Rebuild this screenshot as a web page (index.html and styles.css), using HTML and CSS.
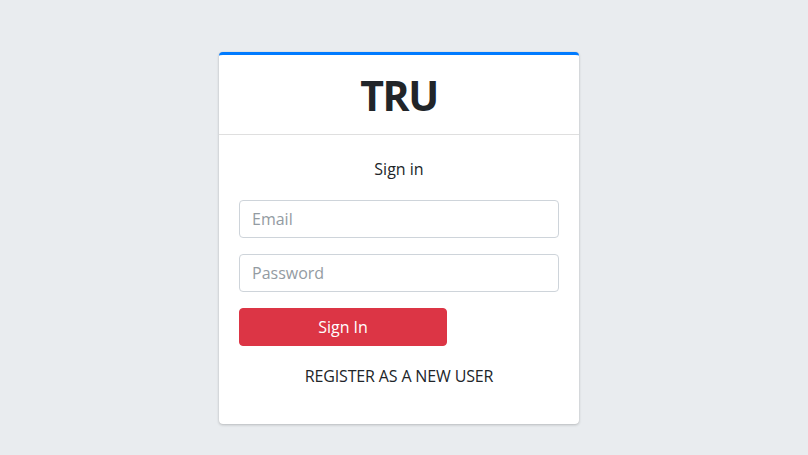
FILE: index.html
```html
<!DOCTYPE html>
<html>
<head>
<meta charset="utf-8">
<link rel="stylesheet" href="styles.css">
</head>
<body>
<div class="login-box">
  <div class="card">
    <div class="card-header">
      <span class="logo">TRU</span>
    </div>
    <div class="card-body">
      <p class="msg">Sign in</p>
      <form class="form">
        <input class="input" type="email" placeholder="Email">
        <input class="input" type="password" placeholder="Password">
        <div class="row">
          <button class="btn" type="button">Sign In</button>
        </div>
      </form>
      <p class="register">REGISTER AS A NEW USER</p>
    </div>
  </div>
</div>
</body>
</html>
```
FILE: styles.css
```css
html, body {
  margin: 0;
  padding: 0;
}
body {
  background: #e9ecef;
  font-family: "Open Sans", "Noto Sans", sans-serif;
  color: #212529;
  font-size: 16px;
  line-height: 24px;
  height: 455px;
  display: flex;
  justify-content: center;
  align-items: flex-start;
  padding: 52px 10px 0 0;
  box-sizing: border-box;
}
.login-box {
  width: 360px;
}
.card {
  background: #fff;
  border-top: 3px solid #007bff;
  border-radius: 4px;
  box-shadow: 0 0 1px rgba(0,0,0,.125), 0 1px 3px rgba(0,0,0,.2);
}
.card-header {
  height: 79px;
  border-bottom: 1px solid rgba(0,0,0,.125);
  display: flex;
  align-items: center;
  justify-content: center;
}
.logo {
  font-weight: 700;
  font-size: 41px;
  line-height: 50px;
  letter-spacing: -1.5px;
}
.card-body {
  padding: 22px 20px 36px;
}
.msg {
  margin: 0;
  padding: 0 20px 19px;
  text-align: center;
}
.form {
  display: flex;
  flex-direction: column;
  gap: 16px;
}
.input {
  height: 38px;
  box-sizing: border-box;
  border: 1px solid #ced4da;
  border-radius: 4px;
  padding: 6px 12px;
  font-family: inherit;
  font-size: 16px;
  color: #495057;
  outline: none;
}
.input::placeholder {
  color: #939ba2;
}
.row {
  display: flex;
}
.btn {
  width: 208px;
  height: 38px;
  background: #dc3545;
  border: 1px solid #dc3545;
  border-radius: 4px;
  color: #fff;
  font-family: inherit;
  font-size: 16px;
  padding: 0;
}
.register {
  margin: 18px 0 0;
  text-align: center;
  color: #212529;
  letter-spacing: -0.15px;
}
```
